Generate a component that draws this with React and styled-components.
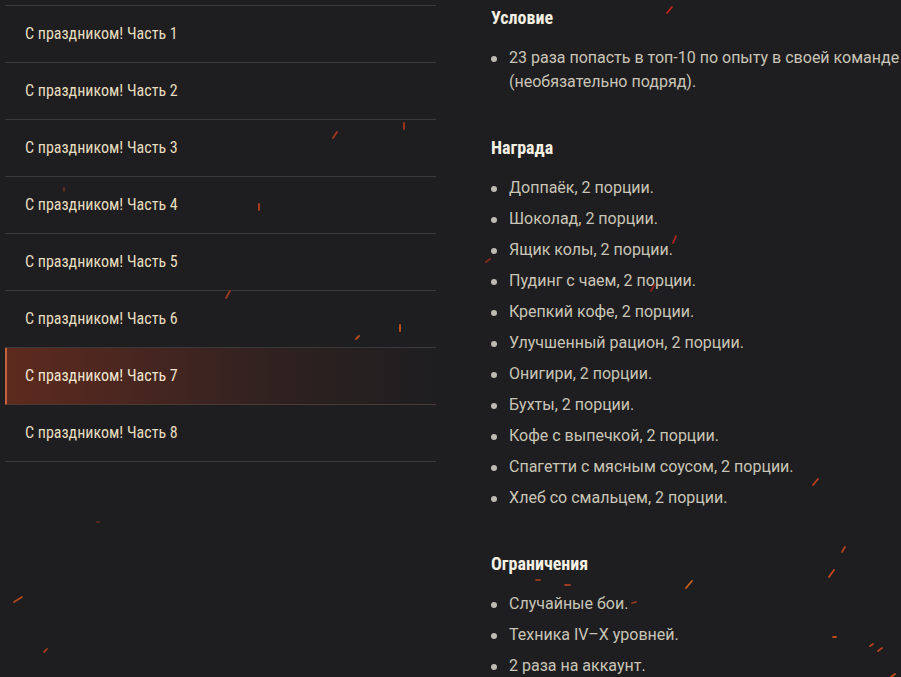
import React from 'react'
import styled, { createGlobalStyle } from 'styled-components'

const GlobalStyle = createGlobalStyle`
  html, body {
    margin: 0;
    padding: 0;
    background: #1e1e20;
  }
  body {
    font-family: Roboto, "Noto Sans", sans-serif;
    overflow: hidden;
  }
`

const Page = styled.div`
  position: relative;
  display: flex;
  align-items: flex-start;
  gap: 55px;
  width: 901px;
  height: 677px;
  padding-left: 5px;
  box-sizing: border-box;
  overflow: hidden;
`

const Menu = styled.ul`
  list-style: none;
  margin: 5px 0 0;
  padding: 0;
  width: 431px;
  flex-shrink: 0;
  border-top: 1px solid #3a3a3c;
`

const MenuItem = styled.li`
  display: flex;
  align-items: center;
  height: 54px;
  padding: 0 0 2px ${p => (p.$active ? '18px' : '20px')};
  border-bottom: 1px solid ${p => (p.$active ? '#4a3a36' : '#3a3a3c')};
  border-left: ${p => (p.$active ? '2px solid #c4603c' : 'none')};
  background: ${p => (p.$active
    ? 'linear-gradient(90deg, #5e2a1e 0%, #482620 30%, #2e2120 65%, rgba(30,30,32,0) 100%)'
    : 'transparent')};
  font-family: "Roboto Condensed", Roboto, sans-serif;
  font-stretch: 75%;
  font-size: 16px;
  color: ${p => (p.$active ? '#f0e4ce' : '#e6dcbf')};
`

const Content = styled.div`
  margin-top: 6px;
  width: 410px;
`

const Section = styled.section`
  & + & {
    margin-top: 42px;
  }
`

const Heading = styled.h3`
  margin: 0 0 16px;
  font-family: "Roboto Condensed", Roboto, sans-serif;
  font-stretch: 75%;
  font-weight: 700;
  font-size: 18px;
  line-height: 24px;
  color: #f4f0e3;
`

const List = styled.ul`
  list-style: none;
  margin: 0;
  padding: 0;
  display: flex;
  flex-direction: column;
  gap: 7px;
`

const Item = styled.li`
  position: relative;
  padding-left: 18px;
  font-size: 16px;
  line-height: 24px;
  color: #c9c5b6;

  &::before {
    content: '';
    position: absolute;
    left: 0;
    top: 10px;
    width: 6px;
    height: 6px;
    border-radius: 50%;
    background: #bdbab0;
  }
`

const Sparks = styled.svg`
  position: absolute;
  inset: 0;
  pointer-events: none;
`

const menu = [1, 2, 3, 4, 5, 6, 7, 8].map(n => `С праздником! Часть ${n}`)

const sections = [
  {
    title: 'Условие',
    items: ['23 раза попасть в топ-10 по опыту в своей команде (необязательно подряд).'],
  },
  {
    title: 'Награда',
    items: [
      'Доппаёк, 2 порции.',
      'Шоколад, 2 порции.',
      'Ящик колы, 2 порции.',
      'Пудинг с чаем, 2 порции.',
      'Крепкий кофе, 2 порции.',
      'Улучшенный рацион, 2 порции.',
      'Онигири, 2 порции.',
      'Бухты, 2 порции.',
      'Кофе с выпечкой, 2 порции.',
      'Спагетти с мясным соусом, 2 порции.',
      'Хлеб со смальцем, 2 порции.',
    ],
  },
  {
    title: 'Ограничения',
    items: ['Случайные бои.', 'Техника IV–X уровней.', '2 раза на аккаунт.'],
  },
]

// x1, y1, x2, y2, colour
const sparks = [
  [667, 13, 672, 7, '#c0241c'],
  [333, 138, 337, 132, '#a8361f'],
  [404, 123, 404, 129, '#a8361f'],
  [259, 204, 259, 210, '#b3401f'],
  [226, 298, 230, 291, '#9c3a20'],
  [400, 325, 400, 331, '#c4561e'],
  [356, 339, 359, 336, '#b84a22'],
  [64, 188, 64, 191, '#6a3020'],
  [486, 262, 490, 259, '#8a2a1e'],
  [673, 243, 676, 236, '#a82a1c'],
  [651, 291, 655, 284, '#8c1e16'],
  [813, 485, 818, 479, '#b8401e'],
  [842, 552, 845, 547, '#b8401e'],
  [829, 577, 834, 570, '#c4481e'],
  [833, 637, 836, 637, '#c4481e'],
  [870, 646, 873, 644, '#b8401e'],
  [878, 651, 882, 648, '#b8401e'],
  [686, 588, 692, 581, '#c8621e'],
  [536, 580, 540, 580, '#8c3a20'],
  [565, 585, 570, 585, '#9c3a20'],
  [632, 603, 636, 602, '#9c3a20'],
  [14, 602, 22, 597, '#b0481e'],
  [44, 652, 47, 649, '#9c3a20'],
  [891, 677, 895, 674, '#c04a1e'],
  [97, 522, 99, 522, '#5a2a1e'],
]

export default function App() {
  return (
    <>
      <GlobalStyle />
      <Page>
        <Menu>
          {menu.map((label, i) => (
            <MenuItem key={label} $active={i === 6}>{label}</MenuItem>
          ))}
        </Menu>
        <Content>
          {sections.map(s => (
            <Section key={s.title}>
              <Heading>{s.title}</Heading>
              <List>
                {s.items.map(t => <Item key={t}>{t}</Item>)}
              </List>
            </Section>
          ))}
        </Content>
        <Sparks width="901" height="677">
          {sparks.map(([x1, y1, x2, y2, c], i) => (
            <line key={i} x1={x1} y1={y1} x2={x2} y2={y2} stroke={c} strokeWidth="1.8" strokeLinecap="round" />
          ))}
        </Sparks>
      </Page>
    </>
  )
}
